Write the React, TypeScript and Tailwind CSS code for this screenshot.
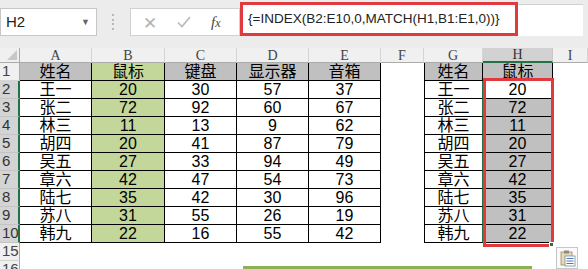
const names = ["王一", "张二", "林三", "胡四", "吴五", "章六", "陆七", "苏八", "韩九"];
const mouse = [20, 72, 11, 20, 27, 42, 35, 31, 22];
const keyboard = [30, 92, 13, 41, 33, 47, 42, 55, 16];
const monitor = [57, 60, 9, 87, 94, 54, 30, 26, 55];
const speaker = [37, 67, 62, 79, 49, 73, 96, 19, 42];

const cols = ["A", "B", "C", "D", "E", "F", "G", "H", "I"];
const cellFont = { fontFamily: "'Liberation Sans', 'Noto Sans CJK SC', sans-serif" };

function ColHeader({ label }: { label: string }) {
  const selected = label === "H";
  return (
    <div
      className={
        selected
          ? "flex items-center justify-center border-r border-r-[#c8c8c8] border-b-2 border-b-[#217346] bg-[#d2d2d2] text-[14px] text-[#333]"
          : "flex items-center justify-center border-r border-r-[#d4d4d4] border-b border-b-[#ababab] bg-[#f0f0f0] text-[14px] text-[#444]"
      }
      style={{ fontFamily: "'Liberation Serif', serif" }}
    >
      {label}
    </div>
  );
}

function RowHeader({ n, selected }: { n: number; selected: boolean }) {
  return (
    <div
      className={
        selected
          ? "flex items-center border-b border-b-[#c4c4c4] border-r-2 border-r-[#217346] bg-[#d4d4d4] pl-[2px] text-[15px] text-[#333]"
          : "flex items-center border-b border-b-[#d4d4d4] border-r border-r-[#ababab] bg-[#f0f0f0] pl-[2px] text-[15px] text-[#444]"
      }
      style={{ fontFamily: "'Liberation Sans', sans-serif" }}
    >
      {n}
    </div>
  );
}

function Cell({ text, className }: { text?: string | number; className: string }) {
  return (
    <div className={"flex items-center justify-center text-[16px] leading-none text-black " + className} style={cellFont}>
      {text}
    </div>
  );
}

function DataRow({ r }: { r: number }) {
  const i = r - 2;
  const b = " border-b border-b-black";
  return (
    <>
      <RowHeader n={r} selected />
      <Cell text={names[i]} className={"bg-white border-r border-r-black" + b} />
      <Cell text={mouse[i]} className={"bg-[#c4d79b] border-r border-r-black" + b} />
      <Cell text={keyboard[i]} className={"bg-white border-r border-r-black" + b} />
      <Cell text={monitor[i]} className={"bg-white border-r border-r-black" + b} />
      <Cell text={speaker[i]} className={"bg-white border-r border-r-black" + b} />
      <Cell className="bg-white" />
      <Cell text={names[i]} className={"bg-white border-l border-l-black border-r border-r-[#217346]" + b} />
      <Cell text={mouse[i]} className={(r === 2 ? "bg-white" : "bg-[#c0c0c0]") + " border-r border-r-black" + b} />
      <Cell className="bg-white" />
    </>
  );
}

function PasteIcon() {
  return (
    <svg width="22" height="22" viewBox="0 0 22 22">
      <rect x="0.5" y="0.5" width="21" height="21" fill="#fafafa" stroke="#c6c6c6" />
      <rect x="5" y="5" width="11" height="13" fill="#e8d9b0" stroke="#9a8a6a" strokeWidth="0.8" />
      <rect x="8" y="3.5" width="5" height="3" fill="#8a8a8a" />
      <rect x="9" y="9" width="10" height="10" fill="#fff" stroke="#7a8aa0" strokeWidth="0.8" />
      <line x1="10.5" y1="11.5" x2="17.5" y2="11.5" stroke="#4a78b8" />
      <line x1="10.5" y1="14" x2="17.5" y2="14" stroke="#4a78b8" />
      <line x1="10.5" y1="16.5" x2="17.5" y2="16.5" stroke="#4a78b8" />
    </svg>
  );
}

export default function App() {
  return (
    <div className="relative h-[269px] w-[588px] overflow-hidden bg-white">
      {/* formula bar */}
      <div className="flex h-[48px] items-start bg-[#ececec] pt-[2px]">
        <div className="mt-[6px] flex h-[28px] w-[97px] items-center justify-between border border-[#c6c6c6] bg-white pl-[5px] pr-[6px]">
          <span className="text-[15px] text-[#222]" style={{ fontFamily: "'Liberation Sans', sans-serif" }}>H2</span>
          <span className="text-[9px] text-[#666]">▼</span>
        </div>
        <div className="mt-[12px] ml-[15px] flex h-[16px] w-[3px] flex-col justify-between">
          <span className="h-[2px] w-[2px] bg-[#b8b8b8]" />
          <span className="h-[2px] w-[2px] bg-[#b8b8b8]" />
          <span className="h-[2px] w-[2px] bg-[#b8b8b8]" />
          <span className="h-[2px] w-[2px] bg-[#b8b8b8]" />
        </div>
        <div className="mt-[6px] ml-[15px] flex h-[28px] w-[110px] items-center border border-[#d0d0d0] bg-white">
          <span className="ml-[12px] text-[17px] leading-none text-[#b4b4b4]">✕</span>
          <svg className="ml-[20px]" width="14" height="12" viewBox="0 0 14 12">
            <path d="M1 6.5 L5 10.5 L13 1" fill="none" stroke="#b8b8b8" strokeWidth="1.6" />
          </svg>
          <span className="ml-[20px] text-[15px] italic text-[#444]" style={{ fontFamily: "'Liberation Serif', serif" }}>
            f<span className="text-[12px]">x</span>
          </span>
        </div>
        <div className="flex h-[34px] w-[278px] items-center border-[3px] border-[#e0393e] bg-white pl-[5px]">
          <span className="text-[13.5px] text-[#222]" style={{ fontFamily: "'Liberation Sans', sans-serif" }}>
            {"{=INDEX(B2:E10,0,MATCH(H1,B1:E1,0))}"}
          </span>
        </div>
        <div className="mt-[2px] h-[32px] w-[65px] border-t border-[#d0d0d0] bg-white" />
      </div>

      {/* sheet */}
      <div className="relative grid grid-cols-[20px_72px_73px_72px_72px_72px_43px_59px_70px_35px] grid-rows-[15px_18px_18px_18px_18px_18px_18px_18px_18px_18px_18px_18px_18px]">
        <div className="flex items-end justify-end border-r border-b border-[#ababab] bg-[#f0f0f0] pr-[2px] pb-[2px]">
          <svg width="10" height="10" viewBox="0 0 10 10">
            <path d="M10 0 L10 10 L0 10 Z" fill="#c8c8c8" />
          </svg>
        </div>
        {cols.map((c) => (
          <ColHeader key={c} label={c} />
        ))}

        <RowHeader n={1} selected={false} />
        <Cell text="姓名" className="bg-[#c0c0c0] border-r border-r-black border-b border-b-black" />
        <Cell text="鼠标" className="bg-[#c4d79b] border-r border-r-black border-b border-b-black" />
        <Cell text="键盘" className="bg-[#c0c0c0] border-r border-r-black border-b border-b-black" />
        <Cell text="显示器" className="bg-[#c0c0c0] border-r border-r-black border-b border-b-black" />
        <Cell text="音箱" className="bg-[#c0c0c0] border-r border-r-black border-b border-b-black" />
        <Cell className="bg-white" />
        <Cell text="姓名" className="bg-[#c0c0c0] border-l border-l-black border-r border-r-black border-b border-b-black" />
        <Cell text="鼠标" className="bg-[#c0c0c0] border-r border-r-black border-b border-b-black" />
        <Cell className="bg-white" />

        {[2, 3, 4, 5, 6, 7, 8, 9, 10].map((r) => (
          <DataRow key={r} r={r} />
        ))}

        {[15, 16].map((r) => (
          <div key={r} className="contents">
            <RowHeader n={r} selected={false} />
            <div className="col-span-9 bg-white" />
          </div>
        ))}

        {/* selection outline over H2:H10 */}
        <div className="pointer-events-none absolute left-[483px] top-[30px] h-[169px] w-[71px] border-[3px] border-[#e0393e]" />
        <div className="absolute left-[549px] top-[194px] h-[5px] w-[5px] border border-white bg-[#217346]" />
      </div>

      {/* floating objects */}
      <div className="absolute left-[243px] top-[266px] h-[3px] w-[289px] bg-[#8db255]" />
      <div className="absolute left-[556px] top-[247px]">
        <PasteIcon />
      </div>
    </div>
  );
}
